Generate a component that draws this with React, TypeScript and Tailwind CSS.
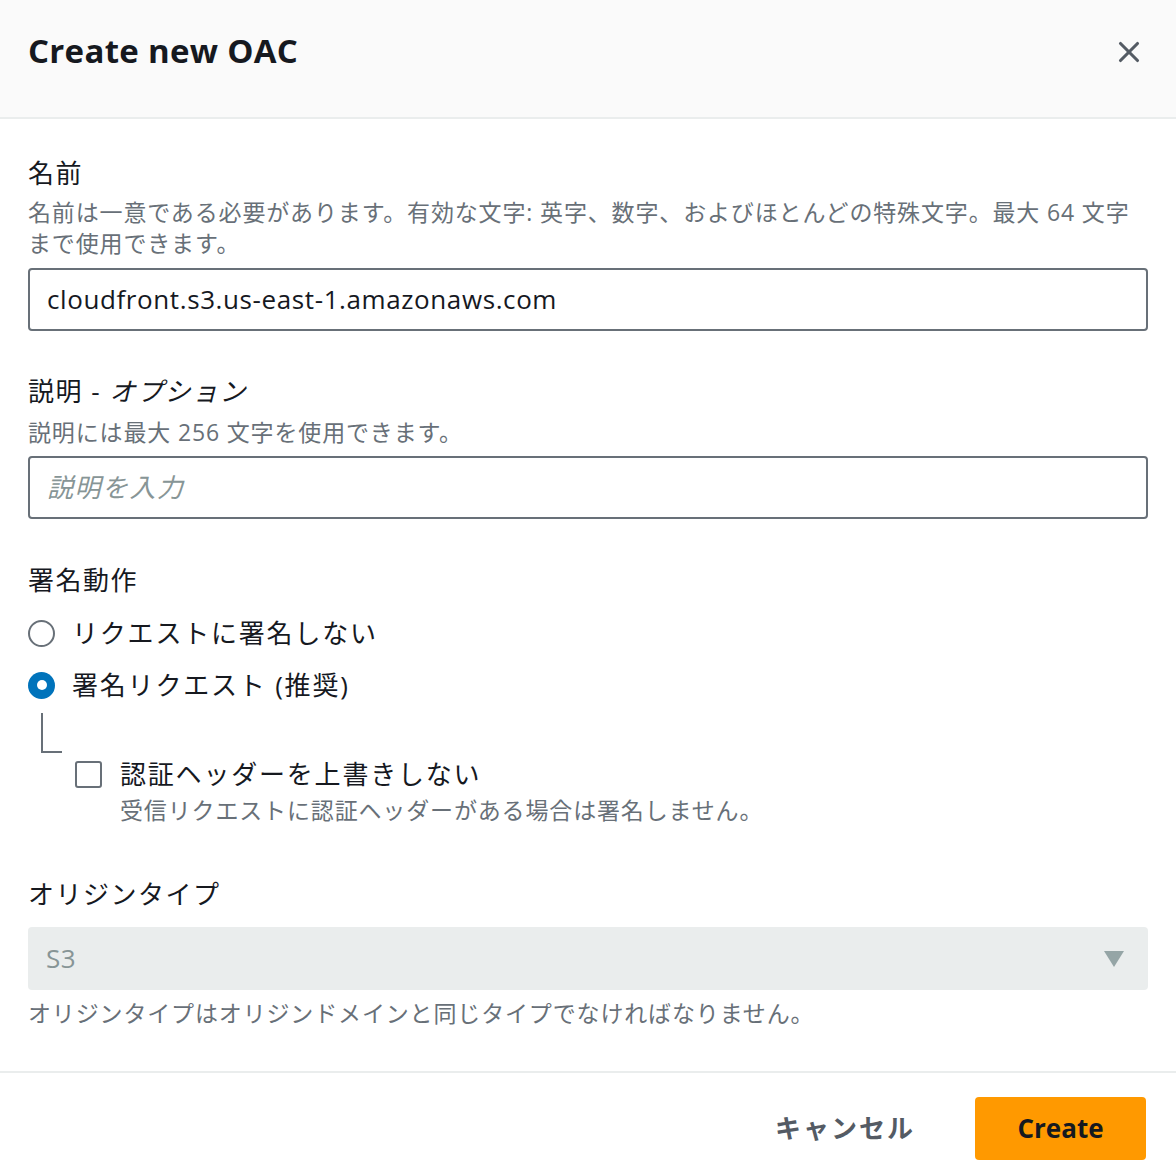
import {X} from 'lucide-react';

const font = "font-['Open_Sans','Noto_Sans_CJK_JP',sans-serif]";

function Label({children}: {children: React.ReactNode}) {
  return <div className="text-[26px] leading-[32px] tracking-[1.5px] text-[#16191f]">{children}</div>;
}

function Hint({children}: {children: React.ReactNode}) {
  return <div className="text-[23px] leading-[31px] tracking-[0.85px] text-[#687078]">{children}</div>;
}

export default function App() {
  return (
    <div className={`w-[1176px] h-[1176px] bg-white flex flex-col ${font}`}>
      <div className="h-[119px] bg-[#fafafa] border-b-2 border-[#eaeded] flex items-start justify-between pl-[28px] pr-[30px] pt-[29px]">
        <h1 className="text-[33px] leading-[44px] font-bold text-[#16191f] tracking-[0.3px]">Create new OAC</h1>
        <button className="mt-[6px] text-[#545b64]">
          <X className="h-[34px] w-[34px]" strokeWidth={2.2} />
        </button>
      </div>

      <div className="flex-1 px-[28px] pt-[38px]">
        <Label>名前</Label>
        <div className="mt-[8px]">
          <Hint>
            名前は一意である必要があります。有効な文字: 英字、数字、およびほとんどの特殊文字。最大 64 文字
            <br />
            まで使用できます。
          </Hint>
        </div>
        <div className="mt-[9px] h-[63px] border-2 border-[#687078] rounded-[4px] flex items-center px-[17px] text-[26px] tracking-[0.6px] text-[#16191f]">
          cloudfront.s3.us-east-1.amazonaws.com
        </div>

        <div className="mt-[44px]">
          <Label>
            説明 - <span className="italic">オプション</span>
          </Label>
        </div>
        <div className="mt-[10px]">
          <Hint>説明には最大 256 文字を使用できます。</Hint>
        </div>
        <div className="mt-[8px] h-[63px] border-2 border-[#687078] rounded-[4px] flex items-center px-[17px] text-[26px] tracking-[1.5px] italic text-[#879596]">
          説明を入力
        </div>

        <div className="mt-[45px]">
          <Label>署名動作</Label>
        </div>
        <div className="mt-[21px] flex items-center h-[32px]">
          <span className="w-[27px] h-[27px] rounded-full border-2 border-[#687078] bg-white shrink-0" />
          <span className="ml-[17px] text-[26px] leading-[32px] text-[#16191f] tracking-[1.8px]">リクエストに署名しない</span>
        </div>
        <div className="mt-[20px] flex items-center h-[32px]">
          <span className="w-[27px] h-[27px] rounded-full bg-[#0073bb] flex items-center justify-center shrink-0">
            <span className="w-[10px] h-[10px] rounded-full bg-white" />
          </span>
          <span className="ml-[17px] text-[26px] leading-[32px] text-[#16191f] tracking-[1.8px]">署名リクエスト (推奨)</span>
        </div>
        <div className="ml-[13px] mt-[12px] w-[21px] h-[40px] border-l-2 border-b-2 border-[#687078]" />
        <div className="ml-[47px] mt-[5px] flex items-start">
          <span className="mt-[3px] w-[27px] h-[27px] rounded-[3px] border-2 border-[#687078] bg-white shrink-0" />
          <div className="ml-[18px]">
            <div className="text-[26px] leading-[32px] text-[#16191f] tracking-[1.8px]">認証ヘッダーを上書きしない</div>
            <div className="mt-[5px]">
              <Hint>受信リクエストに認証ヘッダーがある場合は署名しません。</Hint>
            </div>
          </div>
        </div>

        <div className="mt-[52px]">
          <Label>オリジンタイプ</Label>
        </div>
        <div className="mt-[17px] h-[63px] bg-[#eaeded] rounded-[4px] flex items-center justify-between pl-[18px] pr-[24px]">
          <span className="text-[26px] tracking-[0.6px] text-[#879596]">S3</span>
          <svg width="20" height="16" viewBox="0 0 20 16">
            <path d="M0 0 H20 L10 16 Z" fill="#95a5a6" />
          </svg>
        </div>
        <div className="mt-[8px]">
          <Hint>オリジンタイプはオリジンドメインと同じタイプでなければなりません。</Hint>
        </div>
      </div>

      <div className="h-[105px] border-t-2 border-[#eaeded] flex items-start justify-end pr-[30px] pt-[24px]">
        <button className="h-[63px] px-[30px] text-[26px] font-bold text-[#545b64] tracking-[2px] mr-[30px]">キャンセル</button>
        <button className="h-[63px] w-[171px] bg-[#ff9900] rounded-[4px] text-[26px] font-bold text-[#16191f]">Create</button>
      </div>
    </div>
  );
}
